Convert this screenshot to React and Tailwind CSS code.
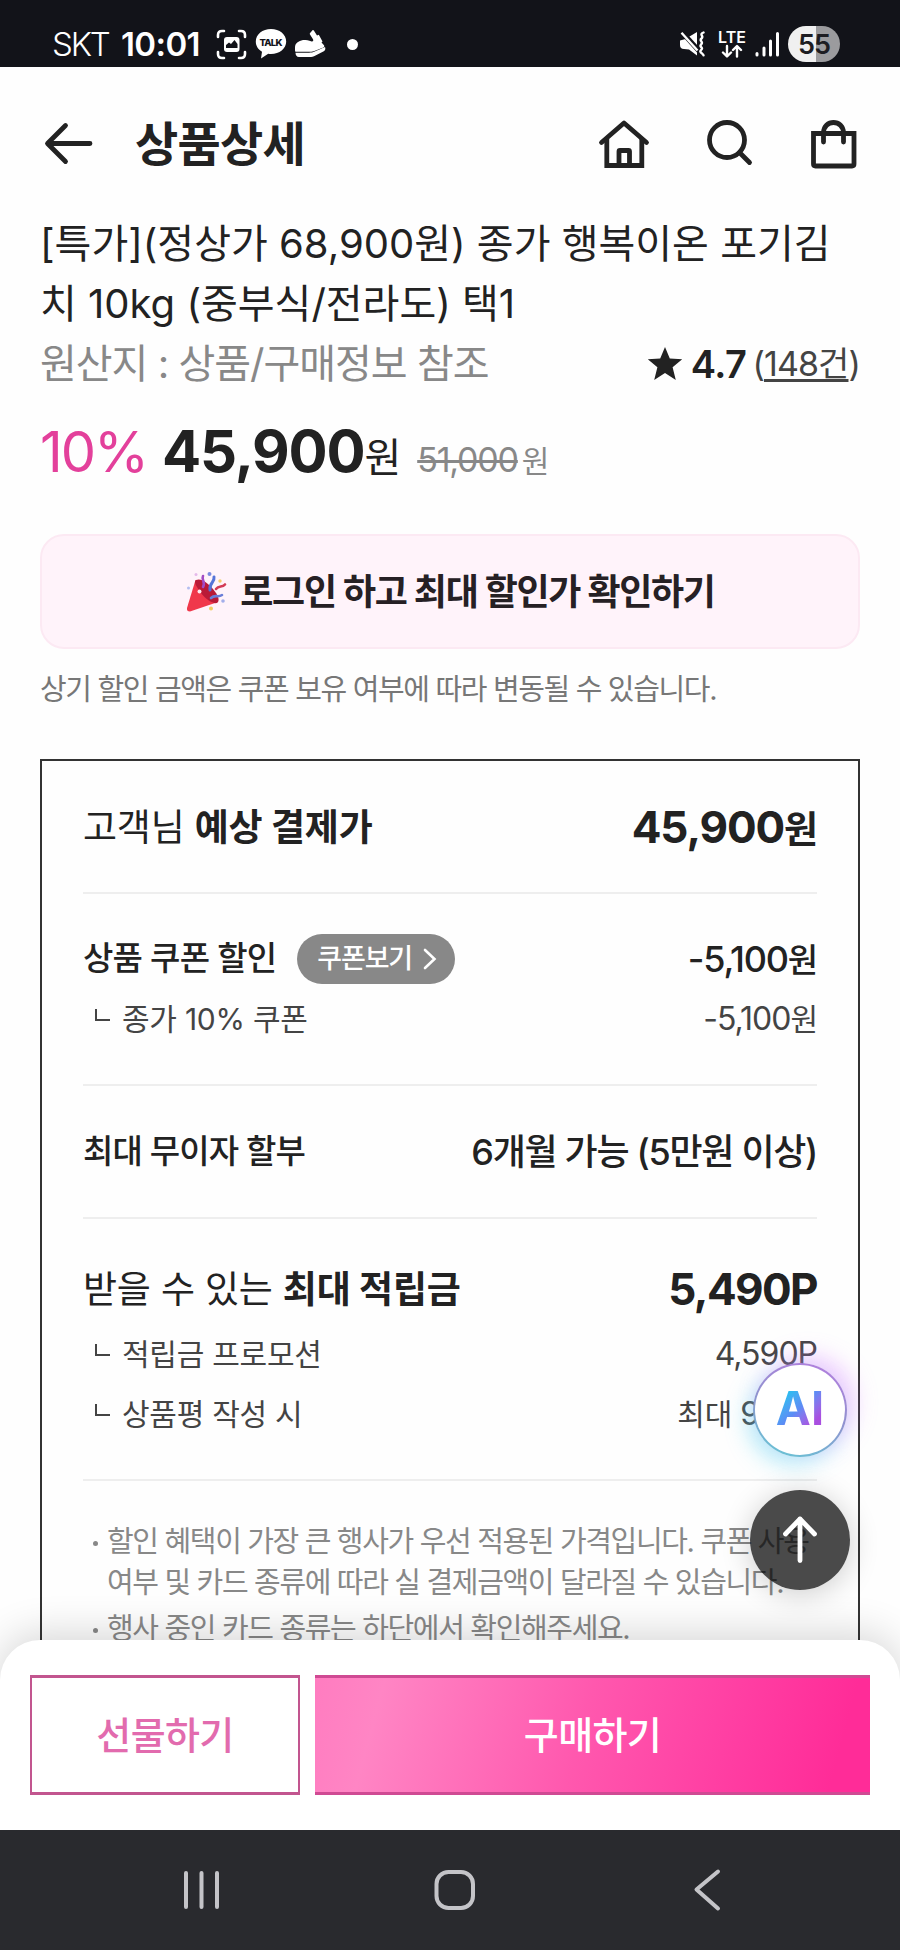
import React from "react";

const notices = [
  ["할인 혜택이 가장 큰 행사가 우선 적용된 가격입니다. 쿠폰 사용", "여부 및 카드 종류에 따라 실 결제금액이 달라질 수 있습니다."],
  ["행사 중인 카드 종류는 하단에서 확인해주세요."],
];

function StatusBar() {
  return (
    <div className="flex h-[67px] shrink-0 items-center bg-[#121319] pt-[21px] pr-[60px] pl-[52px] text-white">
      <span className="w-[69px] text-[33px] leading-none font-light tracking-[-2.2px]">SKT</span>
      <span className="w-[95px] text-[33px] leading-none font-semibold tracking-[-0.6px]">10:01</span>
      <svg width="31" height="31" viewBox="0 0 31 31" fill="none" stroke="white" strokeWidth="2.6" strokeLinecap="round">
        <path d="M2 8V6q0-4 4-4h2M23 2h2q4 0 4 4v2M29 23v2q0 4-4 4h-2M8 29H6q-4 0-4-4v-2" />
        <rect x="8" y="8" width="15.5" height="15" rx="3" fill="white" stroke="none" />
        <path d="M10 19v-3l3-2.500 2 1.500 3.500-4 3 4v4z" fill="#121319" stroke="none" />
      </svg>
      <svg className="ml-2" width="32" height="32" viewBox="0 0 32 32">
        <path d="M16 1C7.500 1 .8 6.400.8 13.500c0 4.500 2.400 8 6.200 10.200L6 30.500l7.200-4.700c1 .1 1.800.2 2.800.2 8.500 0 15.200-5.400 15.200-12.500S24.500 1 16 1z" fill="white" />
        <text x="16" y="17.500" textAnchor="middle" fontSize="9.500" fontWeight="800" fill="#121319" textLength="23">TALK</text>
      </svg>
      <svg className="ml-[7px]" width="32" height="30" viewBox="0 0 32 30" fill="white">
        <path d="M1 18.500c0-4.500 3.500-6.500 8-7.500 3.500 0 6 .3 8 1.200 1.800.6 2.800-.3 2-2l-3-4.700c-.4-.7-.2-1.200.3-1.700l2-2.300c.6-.6 1.200-.5 1.700.2l3 4.800 1.800-.7 3.700 6.700-1 1 2.500 2.700c.8 1.300 0 2-1.200 2.500l-7.800 3.100c-2 .8-3 1-5 1H2c-.8 0-1-.8-1-1.800z" />
        <path d="M1.500 23.800h13.500c2.300 0 4-.4 5.700-1.200l10.300-4.600c.8 1.700.2 3.500-1.200 4.200l-8.300 4.300c-2 1-3.800 1.600-6 1.600H5c-2.200 0-3.500-1.900-3.500-4.300z" />
      </svg>
      <span className="ml-[21px] size-[11px] rounded-full bg-white"></span>
      <svg className="ml-auto" width="27" height="27" viewBox="0 0 27 27">
        <path d="M1 9.500 6.500 8l4-2.500L18 1v23.500l-8-6-5-.5q-4 0-4-4z" fill="white" />
        <path d="M2.500.5 21 21" stroke="#121319" strokeWidth="5" />
        <path d="M2.500 1.800 18.500 19.500" stroke="white" strokeWidth="2.400" />
        <path d="M24.500 1.500c-5 2 1 3.500-2 6s2.500 3-.3 5.800 2.800 3 0 5.500 2 3.500 2.300 5.500" stroke="white" strokeWidth="2.400" fill="none" strokeLinecap="round" />
      </svg>
      <div className="ml-[12px] flex w-[28px] flex-col items-center">
        <span className="text-[16px] leading-[14px] font-semibold">LTE</span>
        <svg width="22" height="14" viewBox="0 0 22 14" fill="none" stroke="white" strokeWidth="2.400" strokeLinecap="round" strokeLinejoin="round">
          <path d="M6 2v10M2 8.500 6 12.500l4-4M16 12.500v-10M12 6l4-4 4 4" />
        </svg>
      </div>
      <svg className="ml-[9px]" width="25" height="26" viewBox="0 0 25 26" stroke="white" strokeWidth="3" strokeLinecap="round">
        <path d="M2 22.500v1.500M9 17v7M15.500 10v14M22.500 2.500V24" />
      </svg>
      <div className="ml-[8px] flex h-[36px] w-[52px] items-center justify-center rounded-full bg-[linear-gradient(90deg,#f0f0f0_54%,#9b9b9e_54%)] text-[27px] leading-none font-semibold tracking-[-1px] text-[#1d1d22]">
        55
      </div>
    </div>
  );
}

function Header() {
  return (
    <header className="flex h-[147px] shrink-0 items-center pt-[6px] pr-[41px] pl-[43px] text-[#222]">
      <svg width="52" height="44" viewBox="0 0 52 44" fill="none" stroke="currentColor" strokeWidth="4.800" strokeLinecap="round" strokeLinejoin="round">
        <path d="M47 21.500H5M22.500 3.500 4.500 21.500l18 18" />
      </svg>
      <h1 className="ml-[40px] text-[47px] leading-none font-bold tracking-[-0.7px]">상품상세</h1>
      <svg className="ml-auto" width="52" height="52" viewBox="0 0 52 52" fill="none" stroke="currentColor" strokeWidth="4.800">
        <path d="M3.500 24.500 26 5l22.500 19.500" strokeLinecap="round" strokeLinejoin="round" />
        <path d="M8.800 21v26.500h35V21M21 47V33.500q0-1 1-1h8.500q1 0 1 1V47" />
      </svg>
      <svg className="ml-[55px]" width="50" height="52" viewBox="0 0 50 52" fill="none" stroke="currentColor" strokeWidth="4.800" strokeLinecap="round">
        <circle cx="22" cy="22" r="17.500" />
        <path d="m34.500 34.500 10 10" />
      </svg>
      <svg className="ml-[54px]" width="50" height="56" viewBox="0 0 50 56" fill="none" stroke="currentColor" strokeWidth="4.800">
        <path d="M4.500 17.500h40.500v30.500q0 2-2 2H6.500q-2 0-2-2z" />
        <path d="M14.500 26V17c0-14 20-14 20 0v9" strokeLinecap="round" />
      </svg>
    </header>
  );
}

function PartyPopper() {
  return (
    <svg width="42" height="42" viewBox="0 0 42 42" fill="none">
      <path d="M10.500 9 2 37q-.5 3.500 3 3.500L33 31z" fill="#f0384b" />
      <path d="M11 9c5-2.500 12 3 17 9s7 11 4.500 13.500S21 29 16 22 8.500 11 11 9z" fill="#b91a37" />
      <path d="M18 5c-2 4 3 6 0 11" stroke="#a24bc4" strokeWidth="2.600" strokeLinecap="round" />
      <path d="M29 6c1 6-5 5-4 13" stroke="#5574d8" strokeWidth="3" strokeLinecap="round" />
      <path d="M31 18c3-4 6-1 9-4.500" stroke="#d33b55" strokeWidth="2.600" strokeLinecap="round" />
      <path d="M26 27c4-4 7 0 11-3" stroke="#6a7ed8" strokeWidth="2.600" strokeLinecap="round" />
      <circle cx="14.500" cy="20.500" r="2" fill="#ffe9ef" />
      <circle cx="11" cy="3.500" r="1.500" fill="#e5b8ea" />
      <circle cx="24.500" cy="3" r="2" fill="#7b8be0" />
      <circle cx="35" cy="10" r="1.700" fill="#f5cf6b" />
      <circle cx="3.500" cy="17" r="1.500" fill="#b4bdf0" />
      <circle cx="38" cy="30" r="1.800" fill="#a3aeea" />
      <circle cx="26" cy="37.500" r="2" fill="#f2cf63" />
    </svg>
  );
}

function SubRow({ label, children }) {
  return (
    <div className="flex h-[60px] items-center justify-between leading-none text-[#444]">
      <div className="flex items-center text-[30px] tracking-[-0.25px]">
        <span className="mt-[-9px] ml-[12px] h-[12px] w-[15px] border-b-2 border-l-2 border-[#444]"></span>
        <span className="ml-[12px]">{label}</span>
      </div>
      <span className="text-[32px] tracking-[-1px]">{children}</span>
    </div>
  );
}

function PriceCard() {
  return (
    <section className="mt-[49px] h-[1000px] border-2 border-[#333] px-[41px] text-[#222]">
      <div className="flex h-[131px] items-center justify-between pt-[1px]">
        <p className="text-[37px] leading-none tracking-[-0.2px]">
          고객님 <b>예상 결제가</b>
        </p>
        <p className="text-[44px] leading-none font-bold tracking-[-1.1px]">
          45,900<span className="text-[37px]">원</span>
        </p>
      </div>
      <div className="h-[192px] border-t-2 border-[#eee] pt-[34px]">
        <div className="flex h-[61px] items-center text-[33px] leading-none font-medium tracking-[-0.8px]">
          <span>상품 쿠폰 할인</span>
          <button className="ml-[21px] flex h-[50px] w-[158px] items-center rounded-full bg-[#888] pl-[20px] text-[27px] tracking-[-1.2px] text-white">
            쿠폰보기
            <svg className="ml-[10px]" width="16" height="24" viewBox="0 0 16 24" fill="none" stroke="white" strokeWidth="2.600" strokeLinecap="round">
              <path d="m3 3 9.500 9L3 21" />
            </svg>
          </button>
          <span className="ml-auto text-[36px] tracking-[-1.2px]">
            -5,100<span className="text-[33px]">원</span>
          </span>
        </div>
        <SubRow label="종가 10% 쿠폰">
          -5,100<span className="text-[30px]">원</span>
        </SubRow>
      </div>
      <div className="flex h-[133px] items-center justify-between border-t-2 border-[#eee] leading-none font-medium">
        <span className="text-[33px] tracking-[-0.9px]">최대 무이자 할부</span>
        <span className="text-[36px] tracking-[-1.3px]">6개월 가능 (5만원 이상)</span>
      </div>
      <div className="h-[262px] border-t-2 border-[#eee] pt-[35px]">
        <div className="flex h-[70px] items-center justify-between">
          <p className="text-[37px] leading-none tracking-[-0.2px]">
            받을 수 있는 <b>최대 적립금</b>
          </p>
          <p className="text-[44px] leading-none font-bold tracking-[-1.6px]">5,490P</p>
        </div>
        <SubRow label="적립금 프로모션">4,590P</SubRow>
        <SubRow label="상품평 작성 시">
          <span className="text-[30px] tracking-[-0.2px]">최대 </span>900P
        </SubRow>
      </div>
      <ul className="border-t-2 border-[#eee] pt-[41px] text-[29px] leading-[40.500px] tracking-[-1.35px] whitespace-nowrap text-[#888]">
        {notices.map((lines, i) => (
          <li key={i} className="mb-[6px] flex">
            <span className="mt-[19px] mr-[9px] ml-[10px] size-[5px] shrink-0 rounded-full bg-[#888]"></span>
            <div>
              {lines.map((line) => (
                <p key={line}>{line}</p>
              ))}
            </div>
          </li>
        ))}
      </ul>
    </section>
  );
}

function FloatingButtons() {
  return (
    <div className="absolute top-[1363px] right-[50px] flex flex-col items-center gap-[33px]">
      <button className="flex size-[94px] items-center justify-center rounded-full border-2 border-transparent bg-[linear-gradient(white,white),linear-gradient(200deg,#b77be0,#8f93cf_50%,#62cbd6)] [background-clip:padding-box,border-box] [background-origin:border-box] pb-[6px] shadow-[8px_-8px_22px_rgba(214,120,255,0.35),-6px_8px_22px_rgba(80,210,240,0.4)]">
        <span className="bg-linear-to-br from-[#22bff0] from-20% via-[#5b8cf5] to-[#a94fe0] to-80% bg-clip-text text-[47px] leading-none font-bold text-transparent">AI</span>
      </button>
      <button className="flex size-[100px] items-center justify-center rounded-full bg-black/71 shadow-[0_4px_30px_rgba(0,0,0,0.2)]">
        <svg width="40" height="50" viewBox="0 0 40 50" fill="none" stroke="white" strokeWidth="4.800" strokeLinecap="round" strokeLinejoin="round">
          <path d="M20 45.500V4M5.500 19 20 4l14.500 15" />
        </svg>
      </button>
    </div>
  );
}

function BottomBar() {
  return (
    <div className="relative z-10 mt-[-40px] flex h-[190px] shrink-0 gap-[15px] rounded-t-[40px] bg-white px-[30px] pt-[35px] text-[38px] leading-none font-medium tracking-[-0.6px] shadow-[0_-6px_40px_rgba(0,0,0,0.16)]">
      <button className="h-[120px] w-[270px] border-x-2 border-y-3 border-[#c2558f] bg-white text-[#e26bae]">선물하기</button>
      <button className="h-[120px] flex-1 border-y-3 border-[#cf4a93] bg-[linear-gradient(105deg,#ff7cc0_0%,#ff85c4_12%,#ff58ae_48%,#ff3da2_75%,#ff2c98_93%)] text-white">구매하기</button>
    </div>
  );
}

function NavBar() {
  return (
    <nav className="relative z-20 flex h-[120px] shrink-0 items-center justify-between bg-[#292a2e] pr-[173px] pl-[181px]">
      <svg width="41" height="42" viewBox="0 0 41 42" stroke="#c4c4c8" strokeWidth="4" strokeLinecap="round">
        <path d="M5 4v34M20.500 4v34M36 4v34" />
      </svg>
      <svg width="42" height="42" viewBox="0 0 42 42" fill="none" stroke="#c4c4c8" strokeWidth="4">
        <rect x="2.500" y="3" width="36.500" height="36" rx="12" />
      </svg>
      <svg width="40" height="44" viewBox="0 0 40 44" fill="none" stroke="#c4c4c8" strokeWidth="4" strokeLinecap="round" strokeLinejoin="round">
        <path d="M31 3.500 9.500 21.500 31 40.500" />
      </svg>
    </nav>
  );
}

function App() {
  return (
    <div className="relative flex h-[1950px] w-[900px] flex-col overflow-hidden bg-[#fefefe] [font-family:Inter,'Noto_Sans_CJK_KR',sans-serif]">
      <StatusBar />
      <Header />
      <main className="h-[1466px] shrink-0 overflow-hidden px-[40px]">
        <div className="text-[40px] leading-[60px] whitespace-nowrap text-[#222]">
          <p>[특가](정상가 68,900원) 종가 행복이온 포기김</p>
          <p>치 10kg (중부식/전라도) 택1</p>
        </div>
        <div className="flex h-[60px] items-center">
          <span className="text-[40px] leading-none tracking-[-1px] text-[#888]">원산지 : 상품/구매정보 참조</span>
          <svg className="ml-auto" width="36" height="36" viewBox="0 0 36 36" fill="#222">
            <path d="m18 1 4.800 11.500 12.400.8-9.600 8 3.200 12.700L18 27 7.200 34l3.200-12.700-9.600-8 12.400-.8z" />
          </svg>
          <span className="ml-[8px] text-[38px] leading-none font-semibold tracking-[-0.5px] text-[#222]">4.7</span>
          <span className="ml-[6px] text-[34px] leading-none tracking-[-0.9px] text-[#444]">
            (<span className="underline decoration-3 underline-offset-3 [text-decoration-skip-ink:none]">148건</span>)
          </span>
        </div>
        <div className="mt-[17px] flex h-[80px] items-baseline leading-none">
          <span className="text-[56px] tracking-[-2px] text-[#e3409b]">10%</span>
          <span className="ml-[15px] text-[58px] leading-[80px] font-bold tracking-[-1.2px] text-[#222]">45,900</span>
          <span className="text-[40px] text-[#222]">원</span>
          <span className="ml-[16px] text-[34px] tracking-[-1.2px] text-[#888] line-through decoration-3">51,000</span>
          <span className="ml-[4px] text-[30px] text-[#888]">원</span>
        </div>
        <button className="mt-[43px] flex h-[115px] w-[820px] items-center justify-center gap-[13px] rounded-[24px] border-2 border-[#fce9f3] bg-[#fff3fa] pt-[1px] text-[36px] leading-none font-bold tracking-[-1.3px] text-[#262024]">
          <PartyPopper />
          로그인 하고 최대 할인가 확인하기
        </button>
        <p className="mt-[21px] text-[29px] leading-[40px] tracking-[-1.35px] text-[#777]">상기 할인 금액은 쿠폰 보유 여부에 따라 변동될 수 있습니다.</p>
        <PriceCard />
      </main>
      <FloatingButtons />
      <BottomBar />
      <NavBar />
    </div>
  );
}

export default App;
